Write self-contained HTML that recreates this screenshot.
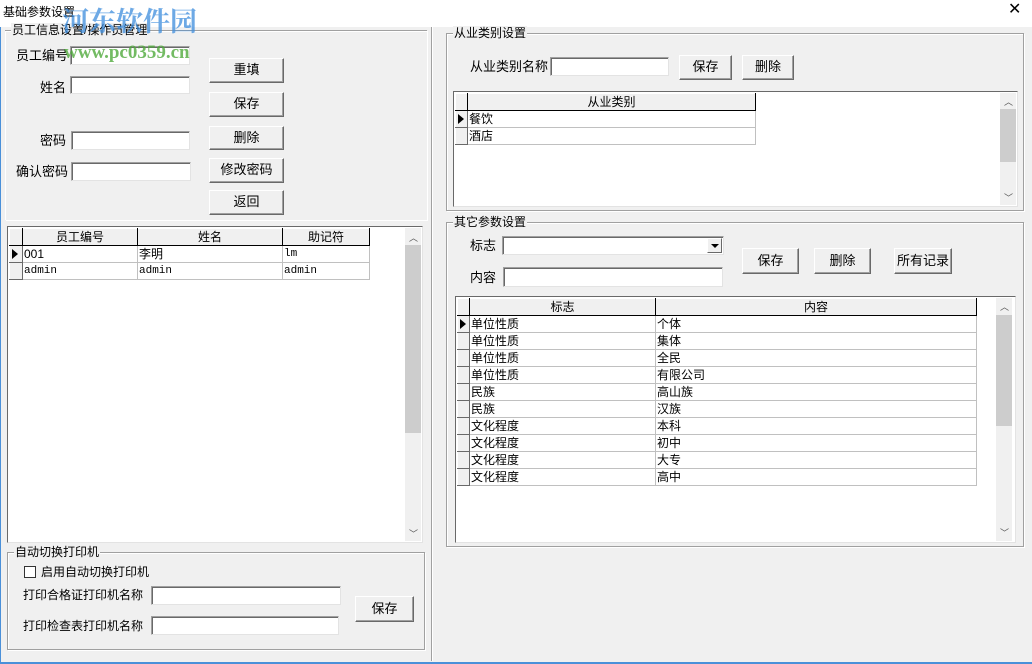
<!DOCTYPE html>
<html><head><meta charset="utf-8"><style>
*{box-sizing:border-box;margin:0;padding:0}
body{width:1032px;height:664px;background:#f0f0f0;position:relative;overflow:hidden;font-family:"Liberation Sans","Noto Sans CJK SC",sans-serif;font-size:12px;color:#000}
.a{position:absolute}
.t{position:absolute;white-space:nowrap;line-height:14px}
.in{position:absolute;background:#fff;border:1px solid #a0a0a0;border-right-color:#e3e3e3;border-bottom-color:#e3e3e3;box-shadow:inset 1px 1px 0 #696969}
.btn{position:absolute;background:#f0f0f0;border:1px solid;border-color:#fff #696969 #696969 #fff;box-shadow:inset -1px -1px 0 #a0a0a0;text-align:center;font-size:13px}
.grp{position:absolute;border:1px solid #a0a0a0;box-shadow:1px 1px 0 #fff inset,1px 1px 0 #fff}
.lg{position:absolute;top:-8px;left:6px;background:#f0f0f0;padding:0 1px;font-size:12px;line-height:14px}
.grid{position:absolute;background:#fff;border:1px solid;border-color:#696969 #e3e3e3 #e3e3e3 #696969}
table{border-collapse:collapse;position:absolute;left:1px;top:1px;font-size:12px}
td{border:1px solid #c0c0c0;height:17px;padding:0 1px;white-space:nowrap;line-height:14px}
th{font-weight:normal;background:#f0f0f0;border:1px solid #000;border-color:#fff #000 #000 #fff;height:17px;line-height:14px}
td.ind{background:#f0f0f0;border:1px solid;border-color:#fff #696969 #696969 #fff;width:12px;padding:0;position:relative}
.arr{position:absolute;left:2px;top:3px;width:0;height:0;border-left:6px solid #000;border-top:5px solid transparent;border-bottom:5px solid transparent}
.sb{position:absolute;background:#f0f0f0}
.th{position:absolute;left:0;width:100%;background:#cdcdcd}
.mono{font-family:"Liberation Mono",monospace;font-size:11px}
</style></head><body>
<div class="a" style="left:0;top:0;width:1032px;height:27px;background:#fff"></div>
<div class="t" style="left:3px;top:5px;font-size:12px">基础参数设置</div>
<div class="t" style="left:1008px;top:3px;font-size:16px">✕</div>
<div class="a" style="left:0;top:27px;width:1px;height:637px;background:#4a90d9"></div>
<div class="a" style="left:0;top:662px;width:1032px;height:2px;background:#4a90d9"></div>
<div class="a" style="left:431px;top:27px;width:1px;height:634px;background:#a0a0a0"></div>
<div class="a" style="left:432px;top:27px;width:1px;height:634px;background:#fff"></div>

<!-- left group -->
<div class="grp" style="left:5px;top:30px;width:422px;height:190px;border-bottom:none;border-left:none;border-right:none"><div class="lg">员工信息设置/操作员管理</div></div>
<div class="t" style="left:16px;top:49px;font-size:13px">员工编号</div>
<div class="in" style="left:70px;top:46px;width:120px;height:19px"></div>
<div class="t" style="left:40px;top:81px;font-size:13px">姓名</div>
<div class="in" style="left:70px;top:76px;width:120px;height:18px"></div>
<div class="t" style="left:40px;top:134px;font-size:13px">密码</div>
<div class="in" style="left:71px;top:131px;width:119px;height:19px"></div>
<div class="t" style="left:16px;top:165px;font-size:13px">确认密码</div>
<div class="in" style="left:71px;top:162px;width:120px;height:19px"></div>
<div class="btn" style="left:209px;top:58px;width:75px;height:25px;line-height:22px">重填</div>
<div class="btn" style="left:209px;top:92px;width:75px;height:25px;line-height:22px">保存</div>
<div class="btn" style="left:209px;top:126px;width:75px;height:24px;line-height:21px">删除</div>
<div class="btn" style="left:209px;top:158px;width:75px;height:25px;line-height:22px">修改密码</div>
<div class="btn" style="left:209px;top:190px;width:75px;height:25px;line-height:22px">返回</div>

<div class="grid" style="left:7px;top:226px;width:416px;height:317px">
<table><tr><th style="width:13px"></th><th style="width:115px">员工编号</th><th style="width:145px">姓名</th><th style="width:87px">助记符</th></tr>
<tr><td class="ind"><div class="arr"></div></td><td>001</td><td>李明</td><td class="mono">lm</td></tr>
<tr><td class="ind"></td><td class="mono">admin</td><td class="mono">admin</td><td class="mono">admin</td></tr></table>
<div class="sb" style="left:397px;top:1px;width:16px;height:313px"><div class="t" style="left:4px;top:3px;font-size:9px;color:#555">︿</div><div class="th" style="top:17px;height:188px"></div><div class="t" style="left:4px;top:299px;font-size:9px;color:#555">﹀</div></div>
</div>

<div class="grp" style="left:7px;top:552px;width:418px;height:98px"><div class="lg">自动切换打印机</div></div>
<div class="a" style="left:24px;top:566px;width:12px;height:12px;border:1px solid #333;background:#fff"></div>
<div class="t" style="left:41px;top:565px;font-size:12px">启用自动切换打印机</div>
<div class="t" style="left:23px;top:588px;font-size:12px">打印合格证打印机名称</div>
<div class="in" style="left:151px;top:586px;width:190px;height:19px"></div>
<div class="t" style="left:23px;top:619px;font-size:12px">打印检查表打印机名称</div>
<div class="in" style="left:151px;top:616px;width:188px;height:19px"></div>
<div class="btn" style="left:355px;top:596px;width:59px;height:26px;line-height:23px">保存</div>

<!-- right -->
<div class="grp" style="left:446px;top:33px;width:578px;height:178px"><div class="lg">从业类别设置</div></div>
<div class="t" style="left:470px;top:60px;font-size:13px">从业类别名称</div>
<div class="in" style="left:550px;top:57px;width:119px;height:19px"></div>
<div class="btn" style="left:679px;top:55px;width:53px;height:25px;line-height:22px">保存</div>
<div class="btn" style="left:742px;top:55px;width:52px;height:25px;line-height:22px">删除</div>
<div class="grid" style="left:453px;top:91px;width:565px;height:116px">
<table><tr><th style="width:12px"></th><th style="width:288px">从业类别</th></tr>
<tr><td class="ind"><div class="arr"></div></td><td>餐饮</td></tr>
<tr><td class="ind"></td><td>酒店</td></tr></table>
<div class="sb" style="left:546px;top:1px;width:16px;height:112px"><div class="t" style="left:4px;top:2px;font-size:9px;color:#555">︿</div><div class="th" style="top:16px;height:53px"></div><div class="t" style="left:4px;top:98px;font-size:9px;color:#555">﹀</div></div>
</div>

<div class="grp" style="left:446px;top:222px;width:578px;height:325px"><div class="lg">其它参数设置</div></div>
<div class="t" style="left:470px;top:239px;font-size:13px">标志</div>
<div class="in" style="left:502px;top:236px;width:222px;height:19px"><div class="a" style="right:1px;top:1px;width:15px;height:15px;background:#f0f0f0;border:1px solid;border-color:#fff #696969 #696969 #fff"><div class="a" style="left:3px;top:5px;border-top:4px solid #000;border-left:4px solid transparent;border-right:4px solid transparent"></div></div></div>
<div class="t" style="left:470px;top:271px;font-size:13px">内容</div>
<div class="in" style="left:503px;top:267px;width:220px;height:20px"></div>
<div class="btn" style="left:742px;top:248px;width:57px;height:26px;line-height:23px">保存</div>
<div class="btn" style="left:814px;top:248px;width:57px;height:26px;line-height:23px">删除</div>
<div class="btn" style="left:894px;top:248px;width:58px;height:26px;line-height:23px">所有记录</div>
<div class="grid" style="left:455px;top:296px;width:561px;height:247px">
<table><tr><th style="width:12px"></th><th style="width:186px">标志</th><th style="width:321px">内容</th></tr>
<tr><td class="ind"><div class="arr"></div></td><td>单位性质</td><td>个体</td></tr>
<tr><td class="ind"></td><td>单位性质</td><td>集体</td></tr>
<tr><td class="ind"></td><td>单位性质</td><td>全民</td></tr>
<tr><td class="ind"></td><td>单位性质</td><td>有限公司</td></tr>
<tr><td class="ind"></td><td>民族</td><td>高山族</td></tr>
<tr><td class="ind"></td><td>民族</td><td>汉族</td></tr>
<tr><td class="ind"></td><td>文化程度</td><td>本科</td></tr>
<tr><td class="ind"></td><td>文化程度</td><td>初中</td></tr>
<tr><td class="ind"></td><td>文化程度</td><td>大专</td></tr>
<tr><td class="ind"></td><td>文化程度</td><td>高中</td></tr></table>
<div class="sb" style="left:540px;top:1px;width:16px;height:243px"><div class="t" style="left:4px;top:2px;font-size:9px;color:#555">︿</div><div class="th" style="top:17px;height:111px"></div><div class="t" style="left:4px;top:228px;font-size:9px;color:#555">﹀</div></div>
</div>

<!-- watermark -->
<div class="t" style="left:62px;top:6px;font-size:27px;line-height:32px;font-weight:bold;color:rgba(60,140,220,0.75);font-family:'Liberation Serif','Noto Serif CJK SC',serif">河东软件园</div>
<div class="t" style="left:64px;top:43px;font-size:19px;line-height:20px;font-weight:bold;color:rgba(80,170,60,0.8);font-family:'Liberation Serif',serif">www.pc0359.cn</div>
</body></html>
